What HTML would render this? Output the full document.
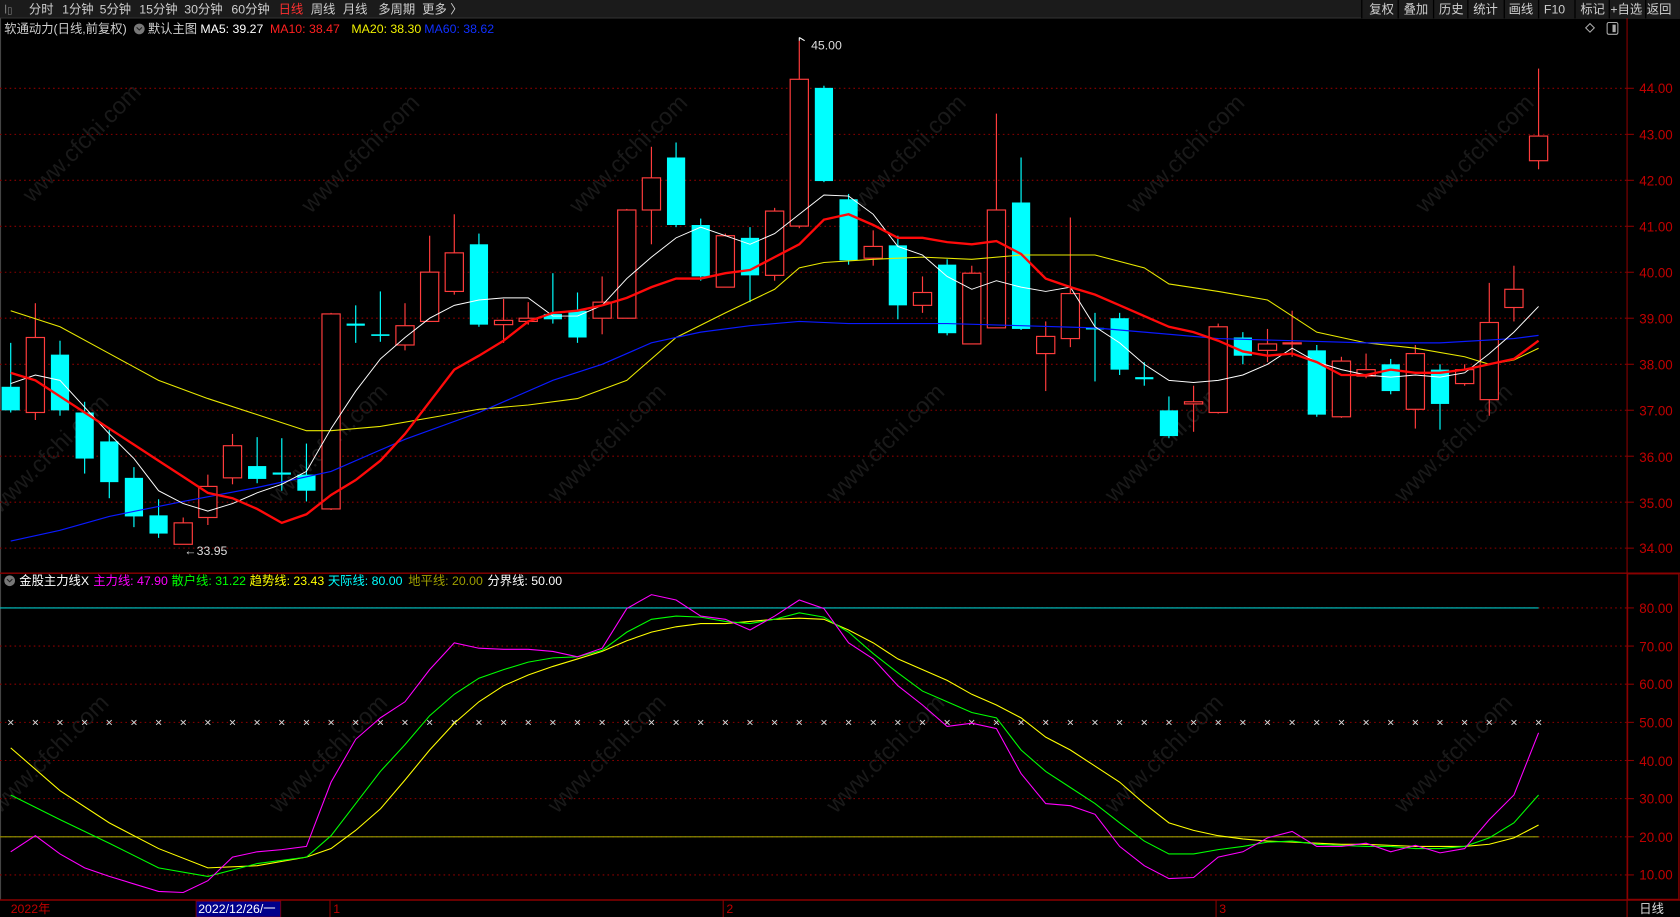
<!DOCTYPE html>
<html><head><meta charset="utf-8"><style>
html,body{margin:0;padding:0;background:#000;overflow:hidden}
svg{display:block}
text{font-family:"Liberation Sans","Noto Sans CJK SC",sans-serif;font-size:11.5px}
</style></head><body>
<svg width="1680" height="917" viewBox="0 0 1568 855.87" xmlns="http://www.w3.org/2000/svg">
<rect width="1568" height="856" fill="#000"/>
<!-- watermarks -->
<g fill="#191919">
<text transform="translate(30,190) rotate(-45)" style="font-size:22px">www.cfchi.com</text>
<text transform="translate(290,200) rotate(-45)" style="font-size:22px">www.cfchi.com</text>
<text transform="translate(540,200) rotate(-45)" style="font-size:22px">www.cfchi.com</text>
<text transform="translate(800,200) rotate(-45)" style="font-size:22px">www.cfchi.com</text>
<text transform="translate(1060,200) rotate(-45)" style="font-size:22px">www.cfchi.com</text>
<text transform="translate(1330,200) rotate(-45)" style="font-size:22px">www.cfchi.com</text>
<text transform="translate(0,480) rotate(-45)" style="font-size:22px">www.cfchi.com</text>
<text transform="translate(260,470) rotate(-45)" style="font-size:22px">www.cfchi.com</text>
<text transform="translate(520,470) rotate(-45)" style="font-size:22px">www.cfchi.com</text>
<text transform="translate(780,470) rotate(-45)" style="font-size:22px">www.cfchi.com</text>
<text transform="translate(1040,470) rotate(-45)" style="font-size:22px">www.cfchi.com</text>
<text transform="translate(1310,470) rotate(-45)" style="font-size:22px">www.cfchi.com</text>
<text transform="translate(0,760) rotate(-45)" style="font-size:22px">www.cfchi.com</text>
<text transform="translate(260,760) rotate(-45)" style="font-size:22px">www.cfchi.com</text>
<text transform="translate(520,760) rotate(-45)" style="font-size:22px">www.cfchi.com</text>
<text transform="translate(780,760) rotate(-45)" style="font-size:22px">www.cfchi.com</text>
<text transform="translate(1040,760) rotate(-45)" style="font-size:22px">www.cfchi.com</text>
<text transform="translate(1310,760) rotate(-45)" style="font-size:22px">www.cfchi.com</text>
</g>
<!-- toolbar -->
<rect x="0" y="0" width="1568" height="16.8" fill="#1b1b1b"/>
<line x1="0" y1="16.8" x2="1568" y2="16.8" stroke="#333"/>
<g fill="#cfcfcf">
<text x="4" y="12.5" fill="#888" style="font-size:9px">ꟾ▯</text>
<text x="27" y="12.5">分时</text><text x="58" y="12.5">1分钟</text><text x="93" y="12.5">5分钟</text>
<text x="130" y="12.5">15分钟</text><text x="172" y="12.5">30分钟</text><text x="216" y="12.5">60分钟</text>
<text x="260" y="12.5" fill="#ff3030">日线</text><text x="290" y="12.5">周线</text><text x="320" y="12.5">月线</text>
<text x="353" y="12.5">多周期</text><text x="394" y="12.5">更多 〉</text>
</g>
<g fill="#cfcfcf">
<rect x="1271" y="0" width="297" height="16.8" fill="#1b1b1b"/>
<text x="1278" y="12.5">复权</text><text x="1310" y="12.5">叠加</text><text x="1343" y="12.5">历史</text>
<text x="1375" y="12.5">统计</text><text x="1408" y="12.5">画线</text><text x="1441" y="12.5">F10</text>
<text x="1475" y="12.5">标记</text><text x="1503" y="12.5">+自选</text><text x="1537" y="12.5">返回</text>
</g>
<g stroke="#000" stroke-width="1.2">
<line x1="1271" y1="0" x2="1271" y2="17"/><line x1="1305" y1="0" x2="1305" y2="17"/><line x1="1338" y1="0" x2="1338" y2="17"/>
<line x1="1370" y1="0" x2="1370" y2="17"/><line x1="1404" y1="0" x2="1404" y2="17"/><line x1="1436" y1="0" x2="1436" y2="17"/>
<line x1="1470" y1="0" x2="1470" y2="17"/><line x1="1502" y1="0" x2="1502" y2="17"/><line x1="1536" y1="0" x2="1536" y2="17"/>
</g>
<!-- legend -->
<text x="4" y="31" fill="#cfcfcf">软通动力(日线,前复权)</text>
<circle cx="130" cy="27" r="5" fill="#777"/><path d="M127.5 25.5l2.5 2.5 2.5-2.5" stroke="#222" fill="none"/>
<text x="138" y="31" fill="#cfcfcf">默认主图</text>
<text x="187" y="31" fill="#fff">MA5: 39.27</text>
<text x="252" y="31" fill="#ff2020">MA10: 38.47</text>
<text x="328" y="31" fill="#f0f000">MA20: 38.30</text>
<text x="396" y="31" fill="#1030ff">MA60: 38.62</text>
<path d="M1484 22l4 4-4 4-4-4z" stroke="#aaa" fill="none"/>
<rect x="1500" y="21" width="10" height="11" rx="1.5" stroke="#aaa" fill="none"/><rect x="1505" y="23" width="3" height="7" fill="#aaa"/>
<!-- frame -->
<line x1="0.5" y1="17" x2="0.5" y2="840" stroke="#444"/>
<line x1="1518.6" y1="17" x2="1518.6" y2="856" stroke="#8b0000"/>
<line x1="0" y1="535" x2="1568" y2="535" stroke="#8b0000" stroke-width="1.3"/>
<rect x="1519" y="535.5" width="48" height="304" fill="none" stroke="#8b0000" stroke-width="1.3"/>
<line x1="0" y1="840" x2="1568" y2="840" stroke="#8b0000" stroke-width="1.3"/>
<!-- price grid -->
<g stroke="#8b0000" stroke-dasharray="1.5 3" stroke-width="1">
<line x1="0" y1="82.4" x2="1518" y2="82.4"/><line x1="0" y1="125.4" x2="1518" y2="125.4"/><line x1="0" y1="168.3" x2="1518" y2="168.3"/>
<line x1="0" y1="211.2" x2="1518" y2="211.2"/><line x1="0" y1="254.1" x2="1518" y2="254.1"/><line x1="0" y1="297" x2="1518" y2="297"/>
<line x1="0" y1="340" x2="1518" y2="340"/><line x1="0" y1="382.9" x2="1518" y2="382.9"/><line x1="0" y1="425.8" x2="1518" y2="425.8"/>
<line x1="0" y1="468.7" x2="1518" y2="468.7"/><line x1="0" y1="511.6" x2="1518" y2="511.6"/>
<line x1="0" y1="567.4" x2="1518" y2="567.4"/><line x1="0" y1="603" x2="1518" y2="603"/><line x1="0" y1="638.6" x2="1518" y2="638.6"/>
<line x1="0" y1="674.2" x2="1518" y2="674.2"/><line x1="0" y1="709.8" x2="1518" y2="709.8"/><line x1="0" y1="745.4" x2="1518" y2="745.4"/>
<line x1="0" y1="781" x2="1518" y2="781"/><line x1="0" y1="816.6" x2="1518" y2="816.6"/>
</g>
<g stroke="#8b0000">
<line x1="1519" y1="82.4" x2="1525" y2="82.4"/><line x1="1519" y1="125.4" x2="1525" y2="125.4"/><line x1="1519" y1="168.3" x2="1525" y2="168.3"/><line x1="1519" y1="211.2" x2="1525" y2="211.2"/><line x1="1519" y1="254.1" x2="1525" y2="254.1"/><line x1="1519" y1="297" x2="1525" y2="297"/><line x1="1519" y1="340" x2="1525" y2="340"/><line x1="1519" y1="382.9" x2="1525" y2="382.9"/><line x1="1519" y1="425.8" x2="1525" y2="425.8"/><line x1="1519" y1="468.7" x2="1525" y2="468.7"/><line x1="1519" y1="511.6" x2="1525" y2="511.6"/>
<line x1="1519" y1="567.4" x2="1525" y2="567.4"/><line x1="1519" y1="603" x2="1525" y2="603"/><line x1="1519" y1="638.6" x2="1525" y2="638.6"/><line x1="1519" y1="674.2" x2="1525" y2="674.2"/><line x1="1519" y1="709.8" x2="1525" y2="709.8"/><line x1="1519" y1="745.4" x2="1525" y2="745.4"/><line x1="1519" y1="781" x2="1525" y2="781"/><line x1="1519" y1="816.6" x2="1525" y2="816.6"/>
</g>
<g fill="#c00000">
<text x="1530" y="87" style="font-size:12.5px">44.00</text><text x="1530" y="130" style="font-size:12.5px">43.00</text><text x="1530" y="173" style="font-size:12.5px">42.00</text>
<text x="1530" y="216" style="font-size:12.5px">41.00</text><text x="1530" y="259" style="font-size:12.5px">40.00</text><text x="1530" y="302" style="font-size:12.5px">39.00</text>
<text x="1530" y="345" style="font-size:12.5px">38.00</text><text x="1530" y="388" style="font-size:12.5px">37.00</text><text x="1530" y="431" style="font-size:12.5px">36.00</text>
<text x="1530" y="474" style="font-size:12.5px">35.00</text><text x="1530" y="516" style="font-size:12.5px">34.00</text>
<text x="1530" y="572" style="font-size:12.5px">80.00</text><text x="1530" y="608" style="font-size:12.5px">70.00</text><text x="1530" y="643" style="font-size:12.5px">60.00</text>
<text x="1530" y="679" style="font-size:12.5px">50.00</text><text x="1530" y="715" style="font-size:12.5px">40.00</text><text x="1530" y="750" style="font-size:12.5px">30.00</text>
<text x="1530" y="786" style="font-size:12.5px">20.00</text><text x="1530" y="821" style="font-size:12.5px">10.00</text>
</g>
<!-- red candles -->
<g stroke="#ff3c3c" stroke-width="1.1" fill="#000">
<line x1="33" y1="283" x2="33" y2="392"/><rect x="24.5" y="315" width="17" height="70"/>
<line x1="171" y1="483" x2="171" y2="508"/><rect x="162.5" y="488" width="17" height="20"/>
<line x1="194" y1="443" x2="194" y2="490"/><rect x="185.5" y="454" width="17" height="29"/>
<line x1="217" y1="405" x2="217" y2="452"/><rect x="208.5" y="416" width="17" height="30"/>
<line x1="309" y1="292" x2="309" y2="476"/><rect x="300.5" y="293" width="17" height="182"/>
<line x1="378" y1="283" x2="378" y2="327"/><rect x="369.5" y="304" width="17" height="18"/>
<line x1="401" y1="220" x2="401" y2="300"/><rect x="392.5" y="254" width="17" height="46"/>
<line x1="424" y1="200" x2="424" y2="275"/><rect x="415.5" y="236" width="17" height="36"/>
<line x1="470" y1="279" x2="470" y2="320"/><rect x="461.5" y="299" width="17" height="4"/>
<line x1="493" y1="282" x2="493" y2="303"/><rect x="484.5" y="297" width="17" height="3"/>
<line x1="562" y1="258" x2="562" y2="312"/><rect x="553.5" y="282" width="17" height="15"/>
<line x1="585" y1="195" x2="585" y2="297"/><rect x="576.5" y="196" width="17" height="101"/>
<line x1="608" y1="137" x2="608" y2="228"/><rect x="599.5" y="166" width="17" height="30"/>
<line x1="677" y1="218" x2="677" y2="268"/><rect x="668.5" y="220" width="17" height="48"/>
<line x1="723" y1="194" x2="723" y2="262"/><rect x="714.5" y="197" width="17" height="60"/>
<line x1="746" y1="38" x2="746" y2="213"/><rect x="737.5" y="74" width="17" height="137"/>
<line x1="815" y1="215" x2="815" y2="248"/><rect x="806.5" y="230" width="17" height="11"/>
<line x1="861" y1="258" x2="861" y2="292"/><rect x="852.5" y="273" width="17" height="12"/>
<line x1="907" y1="248" x2="907" y2="321"/><rect x="898.5" y="255" width="17" height="66"/>
<line x1="930" y1="106" x2="930" y2="306"/><rect x="921.5" y="196" width="17" height="110"/>
<line x1="976" y1="300" x2="976" y2="365"/><rect x="967.5" y="314" width="17" height="16"/>
<line x1="999" y1="203" x2="999" y2="324"/><rect x="990.5" y="274" width="17" height="42"/>
<line x1="1114" y1="360" x2="1114" y2="403"/><rect x="1105.5" y="375" width="17" height="2"/>
<line x1="1137" y1="302" x2="1137" y2="386"/><rect x="1128.5" y="305" width="17" height="80"/>
<line x1="1183" y1="307" x2="1183" y2="338"/><rect x="1174.5" y="321" width="17" height="6"/>
<line x1="1206" y1="290" x2="1206" y2="333"/><rect x="1197.5" y="320" width="17" height="1"/>
<line x1="1252" y1="333" x2="1252" y2="390"/><rect x="1243.5" y="337" width="17" height="52"/>
<line x1="1275" y1="330" x2="1275" y2="353"/><rect x="1266.5" y="345" width="17" height="6"/>
<line x1="1321" y1="322" x2="1321" y2="400"/><rect x="1312.5" y="330" width="17" height="52"/>
<line x1="1367" y1="340" x2="1367" y2="360"/><rect x="1358.5" y="345" width="17" height="13"/>
<line x1="1390" y1="264" x2="1390" y2="388"/><rect x="1381.5" y="301" width="17" height="72"/>
<line x1="1413" y1="248" x2="1413" y2="300"/><rect x="1404.5" y="270" width="17" height="17"/>
<line x1="1436" y1="64" x2="1436" y2="158"/><rect x="1427.5" y="127" width="17" height="23"/>
</g>
<!-- cyan candles -->
<g stroke="#00ffff" stroke-width="1.1" fill="#00ffff">
<line x1="10" y1="320" x2="10" y2="385"/><rect x="1.5" y="361" width="17" height="22" stroke="none"/>
<line x1="56" y1="318" x2="56" y2="388"/><rect x="47.5" y="331" width="17" height="52" stroke="none"/>
<line x1="79" y1="375" x2="79" y2="442"/><rect x="70.5" y="385" width="17" height="43" stroke="none"/>
<line x1="102" y1="400" x2="102" y2="465"/><rect x="93.5" y="412" width="17" height="38" stroke="none"/>
<line x1="125" y1="436" x2="125" y2="492"/><rect x="116.5" y="446" width="17" height="36" stroke="none"/>
<line x1="148" y1="466" x2="148" y2="502"/><rect x="139.5" y="481" width="17" height="17" stroke="none"/>
<line x1="240" y1="408" x2="240" y2="451"/><rect x="231.5" y="435" width="17" height="12" stroke="none"/>
<line x1="263" y1="409" x2="263" y2="458"/><rect x="254.5" y="441" width="17" height="2" stroke="none"/>
<line x1="286" y1="414" x2="286" y2="468"/><rect x="277.5" y="443" width="17" height="15" stroke="none"/>
<line x1="332" y1="285" x2="332" y2="320"/><rect x="323.5" y="302" width="17" height="2" stroke="none"/>
<line x1="355" y1="272" x2="355" y2="319"/><rect x="346.5" y="312" width="17" height="1.5" stroke="none"/>
<line x1="447" y1="218" x2="447" y2="305"/><rect x="438.5" y="228" width="17" height="75" stroke="none"/>
<line x1="516" y1="255" x2="516" y2="302"/><rect x="507.5" y="293" width="17" height="5" stroke="none"/>
<line x1="539" y1="273" x2="539" y2="320"/><rect x="530.5" y="290" width="17" height="25" stroke="none"/>
<line x1="631" y1="133" x2="631" y2="212"/><rect x="622.5" y="147" width="17" height="63" stroke="none"/>
<line x1="654" y1="204" x2="654" y2="262"/><rect x="645.5" y="210" width="17" height="48" stroke="none"/>
<line x1="700" y1="212" x2="700" y2="282"/><rect x="691.5" y="222" width="17" height="35" stroke="none"/>
<line x1="769" y1="80" x2="769" y2="170"/><rect x="760.5" y="82" width="17" height="87" stroke="none"/>
<line x1="792" y1="181" x2="792" y2="247"/><rect x="783.5" y="186" width="17" height="57" stroke="none"/>
<line x1="838" y1="220" x2="838" y2="298"/><rect x="829.5" y="229" width="17" height="56" stroke="none"/>
<line x1="884" y1="242" x2="884" y2="313"/><rect x="875.5" y="247" width="17" height="64" stroke="none"/>
<line x1="953" y1="147" x2="953" y2="308"/><rect x="944.5" y="189" width="17" height="118" stroke="none"/>
<line x1="1022" y1="292" x2="1022" y2="356"/><rect x="1013.5" y="306" width="17" height="1.5" stroke="none"/>
<line x1="1045" y1="292" x2="1045" y2="350"/><rect x="1036.5" y="297" width="17" height="48" stroke="none"/>
<line x1="1068" y1="338" x2="1068" y2="360"/><rect x="1059.5" y="352" width="17" height="2" stroke="none"/>
<line x1="1091" y1="370" x2="1091" y2="409"/><rect x="1082.5" y="383" width="17" height="24" stroke="none"/>
<line x1="1160" y1="310" x2="1160" y2="340"/><rect x="1151.5" y="315" width="17" height="17" stroke="none"/>
<line x1="1229" y1="322" x2="1229" y2="389"/><rect x="1220.5" y="327" width="17" height="60" stroke="none"/>
<line x1="1298" y1="335" x2="1298" y2="368"/><rect x="1289.5" y="340" width="17" height="25" stroke="none"/>
<line x1="1344" y1="340" x2="1344" y2="401"/><rect x="1335.5" y="345" width="17" height="32" stroke="none"/>
</g>
<!-- MAs -->
<polyline fill="none" stroke="#e8e800" stroke-width="1" points="10,290 56,305 102,330 148,355 194,372 240,387 286,402 309,402 355,398 401,390 447,382 493,378 539,372 585,355 631,315 677,292 723,270 746,250 769,245 815,242 861,240 907,242 953,238 976,238 1022,238 1068,250 1091,265 1137,272 1183,280 1229,310 1275,320 1321,325 1367,333 1390,340 1413,336 1436,325"/>
<polyline fill="none" stroke="#0a1aff" stroke-width="1.1" points="10,505 56,495 102,482 171,468 240,455 309,440 378,410 447,385 516,355 562,340 608,320 654,310 700,304 746,300 792,302 838,302 884,302 953,304 1022,306 1068,310 1137,316 1206,318 1275,320 1344,320 1413,316 1436,313"/>
<polyline fill="none" stroke="#ffffff" stroke-width="0.9" points="10,358 33,350 56,355 79,380 102,405 125,428 148,458 171,470 194,477 217,470 240,460 263,452 286,440 309,400 332,365 355,335 378,315 401,297 424,285 447,280 470,278 493,278 516,295 539,295 562,285 585,260 608,240 631,222 654,212 677,220 700,228 723,218 746,200 769,182 792,183 815,200 838,230 861,238 884,258 907,270 930,262 953,268 976,272 999,268 1022,305 1045,320 1068,340 1091,355 1114,357 1137,355 1160,350 1183,340 1206,325 1229,338 1252,345 1275,350 1298,352 1321,350 1344,352 1367,348 1390,330 1413,310 1436,286"/>
<polyline fill="none" stroke="#ff0a0a" stroke-width="2.2" points="10,348 33,355 56,370 79,385 102,400 125,415 148,430 171,445 194,460 217,465 240,475 263,488 286,480 309,462 332,448 355,430 378,405 401,375 424,345 447,332 470,318 493,300 516,292 539,290 562,285 585,278 608,268 631,260 654,260 677,255 700,252 723,240 746,228 769,205 792,200 815,210 838,222 861,222 884,226 907,228 930,225 953,237 976,260 999,268 1022,275 1045,285 1068,295 1091,305 1114,310 1137,318 1160,328 1183,332 1206,330 1229,338 1252,350 1275,350 1298,345 1321,348 1344,348 1367,345 1390,340 1413,335 1436,318"/>
<text x="172" y="518" fill="#ddd">←33.95</text>
<path d="M746 38v-3M746 35l5 3" stroke="#fff" fill="none"/>
<text x="757" y="46" fill="#ddd">45.00</text>
<!-- indicator header -->
<circle cx="9" cy="542" r="5" fill="#777"/><path d="M6.5 540.5l2.5 2.5 2.5-2.5" stroke="#222" fill="none"/>
<text x="18" y="546" fill="#fff">金股主力线X</text>
<text x="87" y="546" fill="#ff00ff">主力线: 47.90</text>
<text x="160" y="546" fill="#00ff00">散户线: 31.22</text>
<text x="233" y="546" fill="#ffff00">趋势线: 23.43</text>
<text x="306" y="546" fill="#00ffff">天际线: 80.00</text>
<text x="381" y="546" fill="#a0a000">地平线: 20.00</text>
<text x="455" y="546" fill="#fff">分界线: 50.00</text>
<line x1="0" y1="567.4" x2="1436" y2="567.4" stroke="#00c8c8" stroke-width="1.1"/>
<line x1="0" y1="781" x2="1436" y2="781" stroke="#9a9a00" stroke-width="1.1"/>
<g fill="#ddd" text-anchor="middle">
<text x="10" y="678">×</text><text x="33" y="678">×</text><text x="56" y="678">×</text><text x="79" y="678">×</text><text x="102" y="678">×</text><text x="125" y="678">×</text><text x="148" y="678">×</text><text x="171" y="678">×</text><text x="194" y="678">×</text><text x="217" y="678">×</text>
<text x="240" y="678">×</text><text x="263" y="678">×</text><text x="286" y="678">×</text><text x="309" y="678">×</text><text x="332" y="678">×</text><text x="355" y="678">×</text><text x="378" y="678">×</text><text x="401" y="678">×</text><text x="424" y="678">×</text><text x="447" y="678">×</text>
<text x="470" y="678">×</text><text x="493" y="678">×</text><text x="516" y="678">×</text><text x="539" y="678">×</text><text x="562" y="678">×</text><text x="585" y="678">×</text><text x="608" y="678">×</text><text x="631" y="678">×</text><text x="654" y="678">×</text><text x="677" y="678">×</text>
<text x="700" y="678">×</text><text x="723" y="678">×</text><text x="746" y="678">×</text><text x="769" y="678">×</text><text x="792" y="678">×</text><text x="815" y="678">×</text><text x="838" y="678">×</text><text x="861" y="678">×</text><text x="884" y="678">×</text><text x="907" y="678">×</text>
<text x="930" y="678">×</text><text x="953" y="678">×</text><text x="976" y="678">×</text><text x="999" y="678">×</text><text x="1022" y="678">×</text><text x="1045" y="678">×</text><text x="1068" y="678">×</text><text x="1091" y="678">×</text><text x="1114" y="678">×</text><text x="1137" y="678">×</text>
<text x="1160" y="678">×</text><text x="1183" y="678">×</text><text x="1206" y="678">×</text><text x="1229" y="678">×</text><text x="1252" y="678">×</text><text x="1275" y="678">×</text><text x="1298" y="678">×</text><text x="1321" y="678">×</text><text x="1344" y="678">×</text><text x="1367" y="678">×</text>
<text x="1390" y="678">×</text><text x="1413" y="678">×</text><text x="1436" y="678">×</text>
</g>
<polyline fill="none" stroke="#ffff00" stroke-width="1" points="10,698 56,738 102,768 148,792 194,810 240,808 286,800 309,792 332,775 355,755 378,728 401,700 424,675 447,655 470,640 493,630 516,622 539,615 562,608 585,598 608,590 631,585 654,582 677,582 700,580 723,578 746,577 769,578 792,588 815,600 838,615 861,625 884,635 907,648 930,658 953,670 976,688 999,700 1022,715 1045,730 1068,750 1091,768 1114,775 1137,780 1160,783 1183,785 1206,786 1229,787 1252,788 1275,788 1298,789 1321,790 1344,790 1367,790 1390,788 1413,782 1436,770"/>
<polyline fill="none" stroke="#00ff00" stroke-width="1" points="10,742 56,765 102,787 148,810 194,818 240,806 286,800 309,780 332,750 355,720 378,695 401,668 424,648 447,633 470,625 493,618 516,614 539,613 562,607 585,590 608,578 631,575 654,576 677,580 700,582 723,578 746,572 769,576 792,590 815,610 838,628 861,645 884,655 907,665 930,670 953,700 976,720 999,735 1022,750 1045,768 1068,785 1091,797 1114,797 1137,793 1160,790 1183,786 1206,785 1229,788 1252,789 1275,790 1298,790 1321,792 1344,792 1367,790 1390,782 1413,768 1436,742"/>
<polyline fill="none" stroke="#ff00ff" stroke-width="1" points="10,795 33,780 56,797 79,810 102,818 125,825 148,832 171,833 194,822 217,800 240,795 263,793 286,790 309,730 332,690 355,670 378,655 401,625 424,600 447,605 470,606 493,606 516,608 539,613 562,605 585,568 608,555 631,560 654,575 677,578 700,588 723,575 746,560 769,568 792,600 815,615 838,640 861,658 884,678 907,675 930,680 953,722 976,750 999,752 1022,760 1045,790 1068,808 1091,820 1114,819 1137,800 1160,795 1183,782 1206,776 1229,790 1252,790 1275,787 1298,795 1321,789 1344,796 1367,792 1390,765 1413,742 1436,684"/>
<!-- bottom axis -->
<text x="10" y="852" fill="#c00000">2022年</text>
<rect x="183" y="841" width="79" height="15" fill="#00008b" stroke="#8b0000" stroke-width="0.8"/>
<text x="185" y="852" fill="#fff">2022/12/26/一</text>
<g stroke="#8b0000"><line x1="308" y1="840" x2="308" y2="856"/><line x1="675" y1="840" x2="675" y2="856"/><line x1="1135" y1="840" x2="1135" y2="856"/><line x1="1518.6" y1="840" x2="1518.6" y2="856"/></g>
<text x="311" y="852" fill="#c00000">1</text>
<text x="678" y="852" fill="#c00000">2</text>
<text x="1138" y="852" fill="#c00000">3</text>
<text x="1530" y="852" fill="#ddd">日线</text>
</svg>
</body></html>
